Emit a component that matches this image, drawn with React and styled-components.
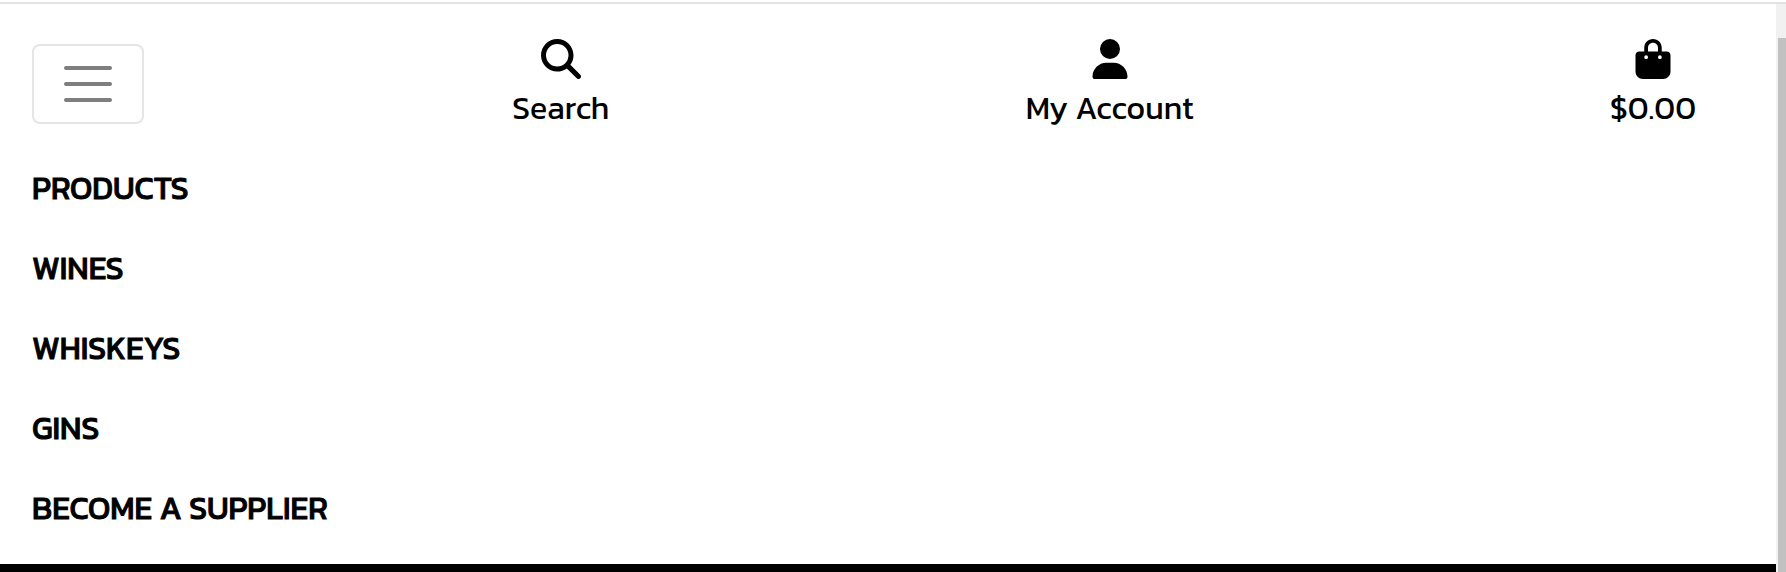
import React from "react";
import styled, { createGlobalStyle } from "styled-components";
import { FaMagnifyingGlass, FaUser, FaBagShopping } from "react-icons/fa6";

const GlobalStyle = createGlobalStyle`
  *, *::before, *::after { box-sizing: border-box; }
  body {
    margin: 0;
    background: #fff;
    color: #000;
    font-family: Kanit, "Noto Sans", sans-serif;
    font-size: 32px;
    font-weight: 400;
    line-height: 48px;
  }
`;

const Shell = styled.div`
  display: flex;
  flex-direction: column;
  height: 100vh;
  padding-top: 2px;
  overflow: hidden;
`;

const Columns = styled.div`
  display: flex;
  flex: 1;
  min-height: 0;
  border-top: 2px solid #e2e2e2;
`;

const Content = styled.div`
  flex: 1;
  min-width: 0;
  display: flex;
  flex-direction: column;
`;

const Header = styled.header`
  padding: 35px 32px 16px;
`;

const Toolbar = styled.div`
  display: flex;
  justify-content: space-between;
  align-items: center;
`;

const Toggle = styled.button`
  display: flex;
  flex-direction: column;
  align-items: center;
  justify-content: center;
  gap: 12px;
  width: 112px;
  height: 80px;
  padding: 0;
  background: transparent;
  border: 2px solid #e5e5e5;
  border-radius: 8px;
  cursor: pointer;
`;

const ToggleBar = styled.span`
  width: 48px;
  height: 4px;
  border-radius: 2px;
  background: #7f7f7f;
`;

const Action = styled.a`
  display: flex;
  flex-direction: column;
  align-items: center;
  gap: 8px;
  margin-right: 48px;
  color: inherit;
  line-height: 42px;
  text-decoration: none;
  white-space: nowrap;
`;

const Menu = styled.ul`
  margin: 19px 0 0;
  padding: 0;
  list-style: none;
`;

const MenuLink = styled.a`
  display: block;
  padding: 16px 0;
  color: inherit;
  -webkit-text-stroke: 1px currentColor;
  text-decoration: none;
`;

const Band = styled.div`
  flex: 1;
  background: #000;
`;

const ScrollTrack = styled.div`
  flex: none;
  display: flex;
  width: 10px;
  padding: 34px 0 0 2px;
  background: #f1f1f1;
`;

const ScrollThumb = styled.div`
  flex: 1;
  background: #c1c1c1;
`;

const actions = [
  { label: "Search", Icon: FaMagnifyingGlass },
  { label: "My Account", Icon: FaUser },
  { label: "$0.00", Icon: FaBagShopping },
];

const categories = ["PRODUCTS", "WINES", "WHISKEYS", "GINS", "BECOME A SUPPLIER"];

export default function App() {
  return (
    <Shell>
      <GlobalStyle />
      <Columns>
        <Content>
          <Header>
            <Toolbar>
              <Toggle type="button" aria-label="Toggle navigation" aria-expanded="true">
                <ToggleBar />
                <ToggleBar />
                <ToggleBar />
              </Toggle>
              {actions.map(({ label, Icon }) => (
                <Action href="#" key={label}>
                  <Icon size={40} aria-hidden="true" />
                  {label}
                </Action>
              ))}
            </Toolbar>
            <nav>
              <Menu>
                {categories.map((name) => (
                  <li key={name}>
                    <MenuLink href="#">{name}</MenuLink>
                  </li>
                ))}
              </Menu>
            </nav>
          </Header>
          <Band />
        </Content>
        <ScrollTrack>
          <ScrollThumb />
        </ScrollTrack>
      </Columns>
    </Shell>
  );
}
